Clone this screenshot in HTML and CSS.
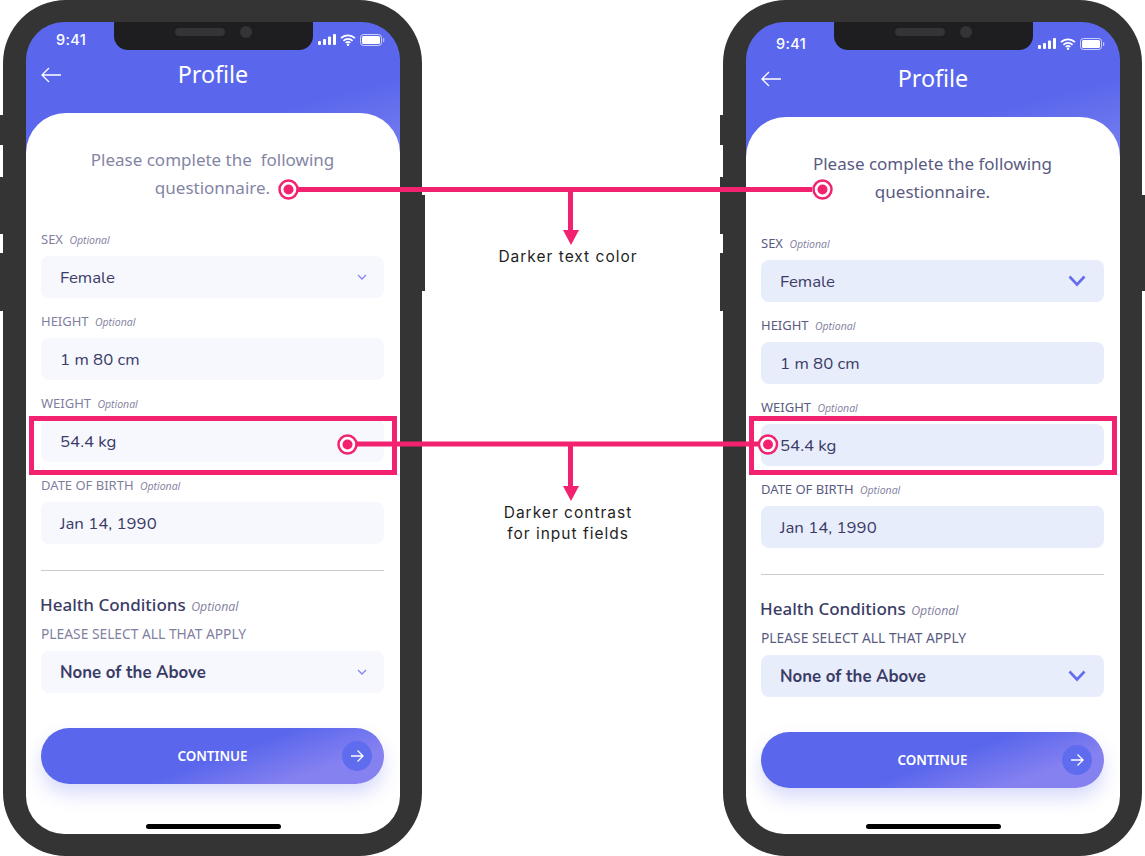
FILE: index.html
```html
<!DOCTYPE html>
<html lang="en">
<head>
  <meta charset="UTF-8">
  <meta name="viewport" content="width=device-width, initial-scale=1.0">
  <title>Profile form comparison</title>
  <link rel="stylesheet" href="styles.css">
</head>
<body>
  <div class="stage">

    <!-- before -->
    <div class="phone">
      <span class="side-btn btn-mute"></span>
      <span class="side-btn btn-up"></span>
      <span class="side-btn btn-down"></span>
      <span class="side-btn btn-power"></span>
      <div class="screen">
        <div class="notch"><span class="speaker"></span><span class="camera"></span></div>
        <div class="header">
          <div class="status">
            <span class="time">9:41</span>
            <div class="status-icons">
              <svg width="18" height="11" viewBox="0 0 18 11"><rect x="0" y="7" width="3" height="4" rx="1"/><rect x="5" y="5" width="3" height="6" rx="1"/><rect x="10" y="2.5" width="3" height="8.5" rx="1"/><rect x="15" y="0" width="3" height="11" rx="1"/></svg>
              <svg width="16" height="12" viewBox="0 0 16 12"><path d="M1 4.2a10 10 0 0 1 14 0M3.4 6.8a6.6 6.6 0 0 1 9.2 0M5.7 9a3.3 3.3 0 0 1 4.6 0" fill="none" stroke="#fff" stroke-width="1.7"/><circle cx="8" cy="10.8" r="1.2"/></svg>
              <svg width="25" height="12" viewBox="0 0 25 12"><rect x="0.5" y="0.5" width="21" height="11" rx="3" fill="none" stroke="#fff" opacity=".7"/><rect x="2" y="2" width="18" height="8" rx="1.5"/><rect x="23" y="4" width="1.2" height="4" rx=".6" opacity=".6"/></svg>
            </div>
          </div>
          <div class="title-row">
            <svg class="back" width="20" height="16" viewBox="0 0 20 16"><path d="M20 8H1M8 1 1 8l7 7" fill="none" stroke="#fff" stroke-width="1.3"/></svg>
            <h1>Profile</h1>
          </div>
        </div>
        <div class="sheet">
          <p class="intro">Please complete the&nbsp; following<br>questionnaire.</p>
          <div class="form">
            <div class="group">
              <div class="label">SEX <em>Optional</em></div>
              <div class="field">Female<svg class="chev" width="10" height="6" viewBox="0 0 10 6"><path d="M1 1l4 4 4-4" fill="none" stroke="#8385f0" stroke-width="1.3"/></svg></div>
            </div>
            <div class="group">
              <div class="label">HEIGHT <em>Optional</em></div>
              <div class="field">1 m 80 cm</div>
            </div>
            <div class="group">
              <div class="label">WEIGHT <em>Optional</em></div>
              <div class="field">54.4 kg</div>
            </div>
            <div class="group">
              <div class="label">DATE OF BIRTH <em>Optional</em></div>
              <div class="field">Jan 14, 1990</div>
            </div>
          </div>
          <hr class="divider">
          <h2>Health Conditions <em>Optional</em></h2>
          <div class="label">PLEASE SELECT ALL THAT APPLY</div>
          <div class="field field-bold">None of the Above<svg class="chev" width="10" height="6" viewBox="0 0 10 6"><path d="M1 1l4 4 4-4" fill="none" stroke="#8385f0" stroke-width="1.3"/></svg></div>
          <div class="continue">
            CONTINUE
            <span class="go"><svg width="14" height="14" viewBox="0 0 14 14"><path d="M1 7h12M7.5 1.5 13 7l-5.5 5.5" fill="none" stroke="#fff" stroke-width="1.3"/></svg></span>
          </div>
          <div class="home-bar"></div>
        </div>
      </div>
    </div>

    <!-- after -->
    <div class="phone phone-after">
      <span class="side-btn btn-mute"></span>
      <span class="side-btn btn-up"></span>
      <span class="side-btn btn-down"></span>
      <span class="side-btn btn-power"></span>
      <div class="screen">
        <div class="notch"><span class="speaker"></span><span class="camera"></span></div>
        <div class="header">
          <div class="status">
            <span class="time">9:41</span>
            <div class="status-icons">
              <svg width="18" height="11" viewBox="0 0 18 11"><rect x="0" y="7" width="3" height="4" rx="1"/><rect x="5" y="5" width="3" height="6" rx="1"/><rect x="10" y="2.5" width="3" height="8.5" rx="1"/><rect x="15" y="0" width="3" height="11" rx="1"/></svg>
              <svg width="16" height="12" viewBox="0 0 16 12"><path d="M1 4.2a10 10 0 0 1 14 0M3.4 6.8a6.6 6.6 0 0 1 9.2 0M5.7 9a3.3 3.3 0 0 1 4.6 0" fill="none" stroke="#fff" stroke-width="1.7"/><circle cx="8" cy="10.8" r="1.2"/></svg>
              <svg width="25" height="12" viewBox="0 0 25 12"><rect x="0.5" y="0.5" width="21" height="11" rx="3" fill="none" stroke="#fff" opacity=".7"/><rect x="2" y="2" width="18" height="8" rx="1.5"/><rect x="23" y="4" width="1.2" height="4" rx=".6" opacity=".6"/></svg>
            </div>
          </div>
          <div class="title-row">
            <svg class="back" width="20" height="16" viewBox="0 0 20 16"><path d="M20 8H1M8 1 1 8l7 7" fill="none" stroke="#fff" stroke-width="1.3"/></svg>
            <h1>Profile</h1>
          </div>
        </div>
        <div class="sheet">
          <p class="intro">Please complete the following<br>questionnaire.</p>
          <div class="form">
            <div class="group">
              <div class="label">SEX <em>Optional</em></div>
              <div class="field">Female<svg class="chev" width="18" height="12" viewBox="0 0 18 12"><path d="M1.5 1.5 9 9.5l7.5-8" fill="none" stroke="#666cf0" stroke-width="2.6"/></svg></div>
            </div>
            <div class="group">
              <div class="label">HEIGHT <em>Optional</em></div>
              <div class="field">1 m 80 cm</div>
            </div>
            <div class="group">
              <div class="label">WEIGHT <em>Optional</em></div>
              <div class="field">54.4 kg</div>
            </div>
            <div class="group">
              <div class="label">DATE OF BIRTH <em>Optional</em></div>
              <div class="field">Jan 14, 1990</div>
            </div>
          </div>
          <hr class="divider">
          <h2>Health Conditions <em>Optional</em></h2>
          <div class="label">PLEASE SELECT ALL THAT APPLY</div>
          <div class="field field-bold">None of the Above<svg class="chev" width="18" height="12" viewBox="0 0 18 12"><path d="M1.5 1.5 9 9.5l7.5-8" fill="none" stroke="#666cf0" stroke-width="2.6"/></svg></div>
          <div class="continue">
            CONTINUE
            <span class="go"><svg width="14" height="14" viewBox="0 0 14 14"><path d="M1 7h12M7.5 1.5 13 7l-5.5 5.5" fill="none" stroke="#fff" stroke-width="1.3"/></svg></span>
          </div>
          <div class="home-bar"></div>
        </div>
      </div>
    </div>

    <!-- callouts drawn over both phones -->
    <svg class="callouts" width="1145" height="856" viewBox="0 0 1145 856">
      <g fill="none" stroke="#f22270" stroke-width="5">
        <rect x="31.5" y="418.5" width="363" height="54"/>
        <rect x="751.5" y="418.5" width="363" height="54"/>
        <path d="M298 189.500H812M570.500 190V232M357 444H758M570.500 444V488"/>
      </g>
      <g fill="#f22270">
        <path d="M563 230h16l-8 15zM563 486h16l-8 15z"/>
      </g>
      <g fill="#fff" stroke="#f22270" stroke-width="2.5">
        <circle cx="288.5" cy="189.5" r="9"/>
        <circle cx="822.5" cy="189.5" r="9"/>
        <circle cx="347.5" cy="444.5" r="9"/>
        <circle cx="768" cy="444.5" r="9"/>
      </g>
      <g fill="#f22270">
        <circle cx="288.5" cy="189.5" r="5"/>
        <circle cx="822.5" cy="189.5" r="5"/>
        <circle cx="347.5" cy="444.5" r="5"/>
        <circle cx="768" cy="444.5" r="5"/>
      </g>
    </svg>
    <div class="note note-text">Darker text color</div>
    <div class="note note-contrast">Darker contrast<br>for input fields</div>
  </div>
</body>
</html>
```

FILE: styles.css
```css
* {
  box-sizing: border-box;
}

body {
  margin: 0;
  background-color: #ffffff;
  font-family: "Noto Sans", sans-serif;
}

.stage {
  position: relative;
  display: flex;
  justify-content: space-between;
  width: 1145px;
  height: 856px;
  padding: 0 3px;
  overflow: hidden;
}

.phone {
  position: relative;
  width: 419px;
  height: 856px;
  padding: 22px 22px 22px 23px;
  background-color: #343434;
  border-radius: 63px;
}

.side-btn {
  position: absolute;
  width: 3px;
  background-color: #343434;
}

.btn-mute { left: -3px; top: 115px; height: 30px; }
.btn-up { left: -3px; top: 177px; height: 57px; }
.btn-down { left: -3px; top: 253px; height: 58px; }
.btn-power { right: -3px; top: 195px; height: 96px; }

.screen {
  position: relative;
  display: flex;
  flex-direction: column;
  height: 812px;
  overflow: hidden;
  border-radius: 38px;
  background: linear-gradient(165deg, #5a67ec 62%, #7e84f1 100%);
  background-size: 100% 150px;
  background-repeat: no-repeat;
}

.notch {
  position: absolute;
  left: 88px;
  top: 0;
  display: flex;
  justify-content: center;
  align-items: center;
  gap: 15px;
  width: 199px;
  height: 28px;
  padding-bottom: 8px;
  background-color: #1e1e20;
  border-radius: 0 0 14px 14px;
}

.speaker {
  width: 50px;
  height: 8px;
  background-color: #343436;
  border-radius: 4px;
}

.camera {
  width: 12px;
  height: 12px;
  background-color: #343436;
  border-radius: 50%;
}

.header {
  height: 91px;
  color: #ffffff;
}

.status {
  display: flex;
  justify-content: space-between;
  align-items: center;
  height: 35px;
  padding: 0 15px 0 30px;
}

.time {
  font-family: "Inter", sans-serif;
  font-size: 14.5px;
  font-weight: 500;
  letter-spacing: 0.4px;
}

.status-icons {
  display: flex;
  align-items: center;
  gap: 4px;
  fill: #ffffff;
}

.title-row {
  position: relative;
  display: flex;
  justify-content: center;
  align-items: center;
  height: 34px;
}

.back {
  position: absolute;
  left: 15px;
  top: 10px;
}

h1 {
  margin: 0;
  font-size: 23.3px;
  font-weight: 400;
}

.sheet {
  display: flex;
  flex-direction: column;
  flex: 1;
  padding: 33px 16px 0 15px;
  background-color: #ffffff;
  border-radius: 40px 40px 0 0;
}

.intro {
  margin: 0;
  font-size: 17px;
  line-height: 28px;
  text-align: center;
  color: #8485a5;
}

.form {
  display: flex;
  flex-direction: column;
  gap: 16px;
  margin-top: 30px;
}

.label {
  height: 16px;
  margin-bottom: 8px;
  font-size: 13px;
  line-height: 14px;
  color: #7f80a0;
}

.label em, h2 em {
  font-family: "Open Sans", sans-serif;
  font-style: italic;
  font-weight: 400;
  font-size: 10.5px;
  margin-left: 3px;
  color: #7f80a0;
}

.field {
  display: flex;
  justify-content: space-between;
  align-items: center;
  height: 42px;
  padding: 0 17px 0 19px;
  background-color: #f7f8fe;
  border-radius: 8px;
  font-family: "Nunito", "Lato", sans-serif;
  font-size: 16.8px;
  color: #3b3c66;
}

.field-bold {
  font-weight: 700;
}

.divider {
  width: 100%;
  height: 1px;
  margin: 26px 0 23px;
  border: none;
  background-color: #cccccc;
}

h2 {
  height: 22px;
  margin: 0 0 11px -1px;
  font-size: 17px;
  font-weight: 500;
  line-height: 22px;
  color: #3b3c66;
}

h2 em {
  font-size: 12.3px;
  margin-left: 1px;
}

h2 + .label {
  font-size: 13.8px;
}

.continue {
  position: relative;
  display: flex;
  justify-content: center;
  align-items: center;
  flex-shrink: 0;
  height: 56px;
  margin-top: 35px;
  padding-bottom: 1px;
  background: linear-gradient(160deg, #5a67ec 52%, #8681f0 80%);
  border-radius: 28px;
  box-shadow: 0 10px 18px rgba(90, 103, 236, 0.24);
  font-size: 13.4px;
  font-weight: 600;
  color: #ffffff;
}

.go {
  position: absolute;
  right: 12px;
  top: 13px;
  display: flex;
  justify-content: center;
  align-items: center;
  width: 30px;
  height: 30px;
  background-color: #5f6cee;
  border-radius: 50%;
}

.home-bar {
  align-self: center;
  flex-shrink: 0;
  width: 135px;
  height: 5px;
  margin-top: auto;
  margin-bottom: 5px;
  margin-left: 2px;
  background-color: #000000;
  border-radius: 3px;
}

/* second phone: screen content sits 4px lower, stronger colours */
.phone-after .header {
  height: 95px;
  padding-top: 4px;
}

.phone-after .intro {
  color: #5a5b82;
}

.phone-after .label {
  color: #5a5b82;
}

.phone-after .field {
  background-color: #e8edfc;
  padding-right: 18px;
}

.callouts {
  position: absolute;
  left: 0;
  top: 0;
}

.note {
  position: absolute;
  left: 468px;
  width: 200px;
  font-family: "Inter", sans-serif;
  font-size: 15.5px;
  line-height: 21px;
  letter-spacing: 1px;
  text-align: center;
  color: #1f1f1f;
}

.note-text { top: 246px; }
.note-contrast { top: 502px; }
```
